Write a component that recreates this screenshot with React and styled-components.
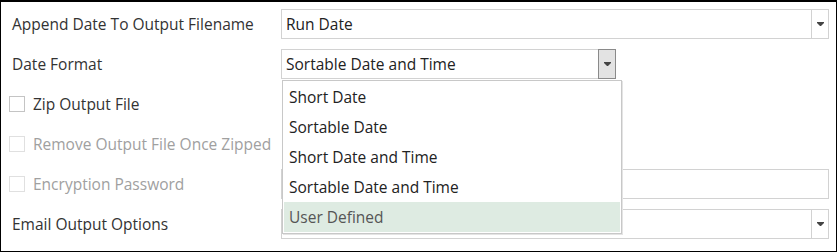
import React from 'react';
import styled, { createGlobalStyle } from 'styled-components';

const GlobalStyle = createGlobalStyle`
  html, body {
    margin: 0;
    padding: 0;
    background: #fff;
  }
  body {
    font-family: 'Open Sans', 'Noto Sans', sans-serif;
  }
`;

const Panel = styled.div`
  position: relative;
  width: 837px;
  height: 252px;
  box-sizing: border-box;
  border: 1px solid #000;
  border-top-width: 2px;
  padding: 7px 7px 0 11px;
  display: grid;
  grid-template-columns: 269px 1fr;
  grid-auto-rows: 30px;
  row-gap: 10px;
  font-size: 15.5px;
  color: #333;
`;

const Label = styled.div`
  display: flex;
  align-items: center;
  color: ${(props) => (props.disabled ? '#a0a0a0' : '#333')};
  white-space: nowrap;
`;

const CheckRow = styled.label`
  display: flex;
  align-items: center;
  gap: 8px;
  margin-left: -3px;
  color: ${(props) => (props.disabled ? '#a0a0a0' : '#333')};
  white-space: nowrap;
`;

const Box = styled.span`
  width: 16px;
  height: 16px;
  box-sizing: border-box;
  border: 1px solid ${(props) => (props.disabled ? '#e0e0e0' : '#c4c4c4')};
  background: #fff;
  flex: none;
`;

const Cell = styled.div`
  position: relative;
  display: flex;
  margin-right: ${(props) => props.right || 0}px;
`;

const Combo = styled.div`
  flex: 1;
  display: flex;
  box-sizing: border-box;
  border: 1px solid #d2d2d2;
  background: #fff;
  color: #222;
`;

const ComboText = styled.div`
  flex: 1;
  display: flex;
  align-items: center;
  padding-left: 4px;
`;

const DropBtn = styled.div`
  width: 17px;
  display: flex;
  align-items: center;
  justify-content: center;
  box-sizing: border-box;
  border-left: 1px solid #d2d2d2;
  ${(props) =>
    props.pressed &&
    `
    background: #e3e3e3;
    border: 1px solid #8a8a8a;
    margin: -1px -1px -1px 0;
    width: 18px;
  `}
`;

const TextBox = styled.div`
  flex: 1;
  box-sizing: border-box;
  border: 1px solid #d2d2d2;
  background: #fff;
`;

const Popup = styled.div`
  position: absolute;
  top: 31px;
  left: 1px;
  width: 340px;
  box-sizing: border-box;
  border: 1px solid #c8c8c8;
  padding: 1px;
  background: #fff;
  box-shadow: 1px 1px 0 #e4e4e4;
  z-index: 2;
`;

const Item = styled.div`
  height: 30px;
  display: flex;
  align-items: center;
  padding-left: 5px;
  color: ${(props) => (props.selected ? '#555' : '#222')};
  background: ${(props) => (props.selected ? '#deebe2' : 'transparent')};
`;

function Arrow() {
  return (
    <svg width="7" height="4" viewBox="0 0 7 4">
      <path d="M0 0h7v1L4 4H3L0 1z" fill="#444" />
    </svg>
  );
}

const options = [
  'Short Date',
  'Sortable Date',
  'Short Date and Time',
  'Sortable Date and Time',
  'User Defined',
];

export default function App() {
  return (
    <>
      <GlobalStyle />
      <Panel>
        <Label>Append Date To Output Filename</Label>
        <Cell>
          <Combo>
            <ComboText>Run Date</ComboText>
            <DropBtn>
              <Arrow />
            </DropBtn>
          </Combo>
        </Cell>

        <Label>Date Format</Label>
        <Cell right={213}>
          <Combo>
            <ComboText>Sortable Date and Time</ComboText>
            <DropBtn pressed>
              <Arrow />
            </DropBtn>
          </Combo>
          <Popup>
            {options.map((opt) => (
              <Item key={opt} selected={opt === 'User Defined'}>
                {opt}
              </Item>
            ))}
          </Popup>
        </Cell>

        <CheckRow>
          <Box />
          Zip Output File
        </CheckRow>
        <Cell />

        <CheckRow disabled>
          <Box disabled />
          Remove Output File Once Zipped
        </CheckRow>
        <Cell />

        <CheckRow disabled>
          <Box disabled />
          Encryption Password
        </CheckRow>
        <Cell>
          <TextBox />
        </Cell>

        <Label>Email Output Options</Label>
        <Cell>
          <Combo>
            <ComboText />
            <DropBtn>
              <Arrow />
            </DropBtn>
          </Combo>
        </Cell>
      </Panel>
    </>
  );
}
